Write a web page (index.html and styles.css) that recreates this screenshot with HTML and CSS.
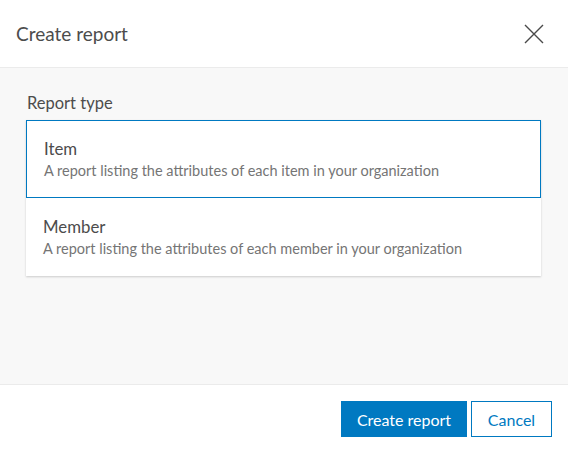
FILE: index.html
```html
<!DOCTYPE html>
<html lang="en">
<head>
<meta charset="utf-8">
<title>Create report</title>
<link rel="stylesheet" href="styles.css">
</head>
<body>
<div class="dialog">
  <header class="header">
    <h1 class="title">Create report</h1>
    <button class="close" aria-label="Close">
      <svg width="20" height="20" viewBox="0 0 20 20"><path d="M1 1L19 19M19 1L1 19" stroke="#4a4a4a" stroke-width="1.4" fill="none"/></svg>
    </button>
  </header>
  <main class="body">
    <div class="label">Report type</div>
    <div class="options">
      <div class="option selected">
        <div class="opt-title">Item</div>
        <div class="opt-desc">A report listing the attributes of each item in your organization</div>
      </div>
      <div class="option">
        <div class="opt-title">Member</div>
        <div class="opt-desc">A report listing the attributes of each member in your organization</div>
      </div>
    </div>
  </main>
  <footer class="footer">
    <button class="btn primary">Create report</button>
    <button class="btn secondary">Cancel</button>
  </footer>
</div>
</body>
</html>
```

FILE: styles.css
```css
* { box-sizing: border-box; }
html, body { margin: 0; padding: 0; }
body {
  font-family: Lato, "Open Sans", sans-serif;
  color: #4c4c4c;
  background: #fff;
}
.dialog {
  width: 568px;
  height: 452px;
  display: flex;
  flex-direction: column;
}
.header {
  height: 68px;
  display: flex;
  align-items: center;
  justify-content: space-between;
  padding: 0 24px 0 16px;
  border-bottom: 1px solid #ebebeb;
  flex: none;
}
.title {
  margin: 0;
  font-size: 19px;
  font-weight: 400;
  color: #4c4c4c;
  padding-bottom: 1px;
}
.close {
  border: 0;
  background: none;
  padding: 0;
  width: 20px;
  height: 20px;
  cursor: pointer;
}
.body {
  flex: 1;
  background: #f8f8f8;
  padding: 25px 27px 0 26px;
}
.label {
  font-size: 16.5px;
  line-height: 20px;
  margin-bottom: 7px;
  padding-left: 1px;
  color: #4c4c4c;
}
.options {
  background: #fff;
  box-shadow: 0 1px 2px rgba(0,0,0,0.18);
}
.option {
  border: 1px solid transparent;
  padding: 15px 16px 17px 16px;
  height: 78px;
}
.option.selected {
  border-color: #0079c1;
  padding-left: 17px;
}
.opt-title {
  font-size: 16.8px;
  line-height: 25px;
  color: #4c4c4c;
}
.opt-desc {
  font-size: 14.5px;
  line-height: 20px;
  color: #757575;
}
.footer {
  height: 68px;
  flex: none;
  border-top: 1px solid #ebebeb;
  display: flex;
  justify-content: flex-end;
  align-items: flex-start;
  gap: 4px;
  padding: 16px 16px 0 0;
}
.btn {
  font-family: inherit;
  font-size: 16px;
  height: 36px;
  padding: 0;
  white-space: nowrap;
  cursor: pointer;
}
.primary {
  background: #0079c1;
  color: #fff;
  border: 1px solid #0079c1;
  width: 126px;
}
.secondary {
  background: #fff;
  color: #0079c1;
  border: 1px solid #0079c1;
  width: 81px;
}
```
